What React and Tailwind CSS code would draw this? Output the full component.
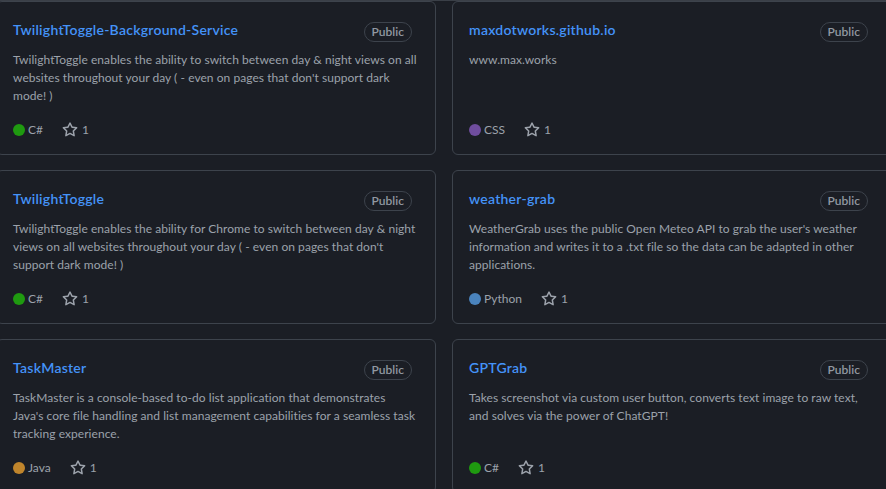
import React from 'react';

const repos = [
    {
        name: 'TwilightToggle-Background-Service',
        desc: [
            'TwilightToggle enables the ability to switch between day & night views on all',
            "websites throughout your day ( - even on pages that don't support dark",
            'mode! )',
        ],
        lang: 'C#',
        color: 'bg-[#1f9a10]',
        stars: 1,
    },
    {
        name: 'maxdotworks.github.io',
        desc: ['www.max.works'],
        lang: 'CSS',
        color: 'bg-[#6f4d9e]',
        stars: 1,
    },
    {
        name: 'TwilightToggle',
        desc: [
            'TwilightToggle enables the ability for Chrome to switch between day & night',
            "views on all websites throughout your day ( - even on pages that don't",
            'support dark mode! )',
        ],
        lang: 'C#',
        color: 'bg-[#1f9a10]',
        stars: 1,
    },
    {
        name: 'weather-grab',
        desc: [
            "WeatherGrab uses the public Open Meteo API to grab the user's weather",
            'information and writes it to a .txt file so the data can be adapted in other',
            'applications.',
        ],
        lang: 'Python',
        color: 'bg-[#4a83bd]',
        stars: 1,
    },
    {
        name: 'TaskMaster',
        desc: [
            'TaskMaster is a console-based to-do list application that demonstrates',
            "Java's core file handling and list management capabilities for a seamless task",
            'tracking experience.',
        ],
        lang: 'Java',
        color: 'bg-[#c0852c]',
        stars: 1,
    },
    {
        name: 'GPTGrab',
        desc: [
            'Takes screenshot via custom user button, converts text image to raw text,',
            'and solves via the power of ChatGPT!',
        ],
        lang: 'C#',
        color: 'bg-[#1f9a10]',
        stars: 1,
    },
];

function StarIcon() {
    return (
        <svg className="w-4 h-4 fill-current" viewBox="0 0 16 16">
            <path d="M8 .25a.75.75 0 0 1 .673.418l1.882 3.815 4.21.612a.75.75 0 0 1 .416 1.279l-3.046 2.97.719 4.192a.751.751 0 0 1-1.088.791L8 12.347l-3.766 1.98a.75.75 0 0 1-1.088-.79l.72-4.194L.818 6.374a.75.75 0 0 1 .416-1.28l4.21-.611L7.327.668A.75.75 0 0 1 8 .25Zm0 2.445L6.615 5.5a.75.75 0 0 1-.564.41l-3.097.45 2.24 2.184a.75.75 0 0 1 .216.664l-.528 3.084 2.769-1.456a.75.75 0 0 1 .698 0l2.77 1.456-.53-3.084a.75.75 0 0 1 .216-.664l2.24-2.183-3.096-.45a.75.75 0 0 1-.564-.41L8 2.694Z" />
        </svg>
    );
}

function PinnedCard({ repo }) {
    return (
        <div className="h-[154px] border border-[#3d434c] rounded-md px-4 pt-4 pb-[15px] flex flex-col">
            <div className="flex items-start justify-between">
                <a className="text-[14px] leading-6 font-semibold tracking-[0.25px] text-[#4493f8] whitespace-nowrap">{repo.name}</a>
                <span className="mt-1 mr-[7px] h-5 px-[7px] border border-[#3d434c] rounded-full text-[12px] leading-[18px] font-semibold text-[#9198a1]">
                    Public
                </span>
            </div>
            <p className="mt-[9px] text-[12px] leading-[18px] tracking-[0.05px] text-[#9ca2ab] whitespace-nowrap">
                {repo.desc.map((line, i) => (
                    <React.Fragment key={i}>
                        {i > 0 && <br />}
                        {line}
                    </React.Fragment>
                ))}
            </p>
            <div className="mt-auto flex items-center text-[12px] leading-[18px] text-[#9ca2ab]">
                <span className={`w-3 h-3 rounded-full ${repo.color}`}></span>
                <span className="ml-[3px] mr-[19px]">{repo.lang}</span>
                <StarIcon />
                <span className="ml-1">{repo.stars}</span>
            </div>
        </div>
    );
}

export default function App() {
    return (
        <div className="h-screen overflow-hidden bg-[#1b1e25] border-t border-[#3a3f47] font-['Segoe_UI','Lato',sans-serif]">
            <div className="grid grid-cols-[440px_440px] gap-x-4 gap-y-[15px] ml-[-4px]">
                {repos.map((repo) => (
                    <PinnedCard key={repo.name} repo={repo} />
                ))}
            </div>
        </div>
    );
}
